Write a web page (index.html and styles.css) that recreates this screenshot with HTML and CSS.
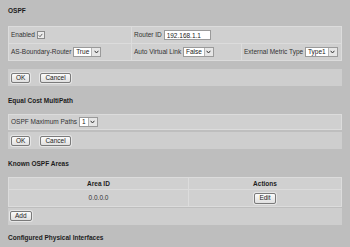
FILE: index.html
```html
<!DOCTYPE html>
<html lang="en">
<head>
  <meta charset="UTF-8" />
  <title>OSPF</title>
  <link rel="stylesheet" href="styles.css">
</head>
<body>
  <h2 class="first">OSPF</h2>
  <table class="panel settings">
    <colgroup>
      <col class="c1" /><col class="c2" /><col class="c3" />
    </colgroup>
    <tr>
      <td>Enabled <span class="check"><svg width="5" height="5" viewBox="0 0 5 5"><path d="M0.8 2.4 L2 3.7 L4.3 0.9" fill="none" stroke="#555" stroke-width="0.9"/></svg></span></td>
      <td colspan="2">Router ID <input type="text" class="text-input" value="192.168.1.1" /></td>
    </tr>
    <tr>
      <td>AS-Boundary-Router <span class="select"><span class="value">True</span><span class="arrow"><svg width="5" height="4" viewBox="0 0 5 4"><path d="M0.6 0.8 L2.5 3 L4.4 0.8" fill="none" stroke="#333" stroke-width="1"/></svg></span></span></td>
      <td>Auto Virtual Link <span class="select"><span class="value">False</span><span class="arrow"><svg width="5" height="4" viewBox="0 0 5 4"><path d="M0.6 0.8 L2.5 3 L4.4 0.8" fill="none" stroke="#333" stroke-width="1"/></svg></span></span></td>
      <td>External Metric Type <span class="select"><span class="value">Type1</span><span class="arrow"><svg width="5" height="4" viewBox="0 0 5 4"><path d="M0.6 0.8 L2.5 3 L4.4 0.8" fill="none" stroke="#333" stroke-width="1"/></svg></span></span></td>
    </tr>
  </table>
  <div class="button-bar spaced">
    <button>OK</button>
    <button>Cancel</button>
  </div>

  <h2>Equal Cost MultiPath</h2>
  <table class="panel single">
    <tr>
      <td>OSPF Maximum Paths <span class="select"><span class="value">1</span><span class="arrow"><svg width="5" height="4" viewBox="0 0 5 4"><path d="M0.6 0.8 L2.5 3 L4.4 0.8" fill="none" stroke="#333" stroke-width="1"/></svg></span></span></td>
    </tr>
  </table>
  <div class="button-bar close">
    <button>OK</button>
    <button>Cancel</button>
  </div>

  <h2>Known OSPF Areas</h2>
  <table class="panel areas">
    <colgroup>
      <col class="a1" /><col class="a2" />
    </colgroup>
    <tr class="head">
      <th>Area ID</th>
      <th>Actions</th>
    </tr>
    <tr>
      <td>0.0.0.0</td>
      <td><button>Edit</button></td>
    </tr>
  </table>
  <div class="button-bar tight">
    <button>Add</button>
  </div>

  <h2 class="last">Configured Physical Interfaces</h2>
</body>
</html>
```

FILE: styles.css
```css
body {
  margin: 0;
  padding: 0 8px;
  background-color: #bebebe;
  font-family: "Liberation Sans", Arial, sans-serif;
  font-size: 6.5px;
  line-height: 8px;
  color: #333;
}

h2 {
  margin: 0;
  padding: 11px 0 9px;
  font-size: 6.5px;
  line-height: 8px;
  font-weight: bold;
  color: #1c1c1c;
}

h2.first {
  padding: 7px 0 11px;
}

h2.last {
  padding-top: 9px;
}

.panel {
  width: 100%;
  table-layout: fixed;
  border-collapse: collapse;
  background-color: #d0d0d0;
}

.panel td, .panel th {
  height: 16px;
  padding: 0 2px;
  border: 1px solid #dcdcdc;
  vertical-align: middle;
  white-space: nowrap;
  overflow: hidden;
}

.settings .c1 { width: 123px; }
.settings .c2 { width: 110px; }

.single td {
  height: 14px;
}

.areas .a1 { width: 180px; }

.areas th, .areas td {
  text-align: center;
}

.areas .head th {
  height: 11px;
  font-weight: bold;
  color: #1c1c1c;
}

.check {
  display: inline-flex;
  align-items: center;
  justify-content: center;
  width: 6px;
  height: 6px;
  border: 1px solid #8a8a8a;
  background-color: #ececec;
  vertical-align: middle;
}

.text-input {
  width: 47px;
  height: 10px;
  box-sizing: border-box;
  margin: 0;
  padding: 0 2px;
  border: 1px solid #9a9a9a;
  background-color: #fff;
  font: inherit;
  color: #222;
  vertical-align: middle;
  outline: none;
}

.select {
  display: inline-flex;
  align-items: stretch;
  height: 10px;
  box-sizing: border-box;
  border: 1px solid #9a9a9a;
  background-color: #fff;
  vertical-align: middle;
}

.select .value {
  padding: 0 2px;
  line-height: 8px;
  color: #222;
}

.select .arrow {
  display: flex;
  align-items: center;
  justify-content: center;
  width: 8px;
  border-left: 1px solid #b4b4b4;
  background-color: #e6e6e6;
}

.button-bar {
  display: flex;
  gap: 10px;
  height: 17px;
  box-sizing: border-box;
  padding: 4px 3px 0;
  background-color: #cecece;
}

.button-bar.spaced { margin-top: 8px; }
.button-bar.close { margin-top: 2px; }
.button-bar.tight { margin-top: 1px; padding-left: 2px; padding-top: 3px; }

button {
  height: 10px;
  margin: 0;
  padding: 0 4px;
  border: 1px solid #7a7a7a;
  border-radius: 2px;
  background: linear-gradient(#fbfbfb, #e0e0e0);
  font: inherit;
  line-height: 8px;
  color: #222;
  box-shadow: 0 0 0 1px #e6e6e6;
}

.areas button {
  height: 11px;
}
```
